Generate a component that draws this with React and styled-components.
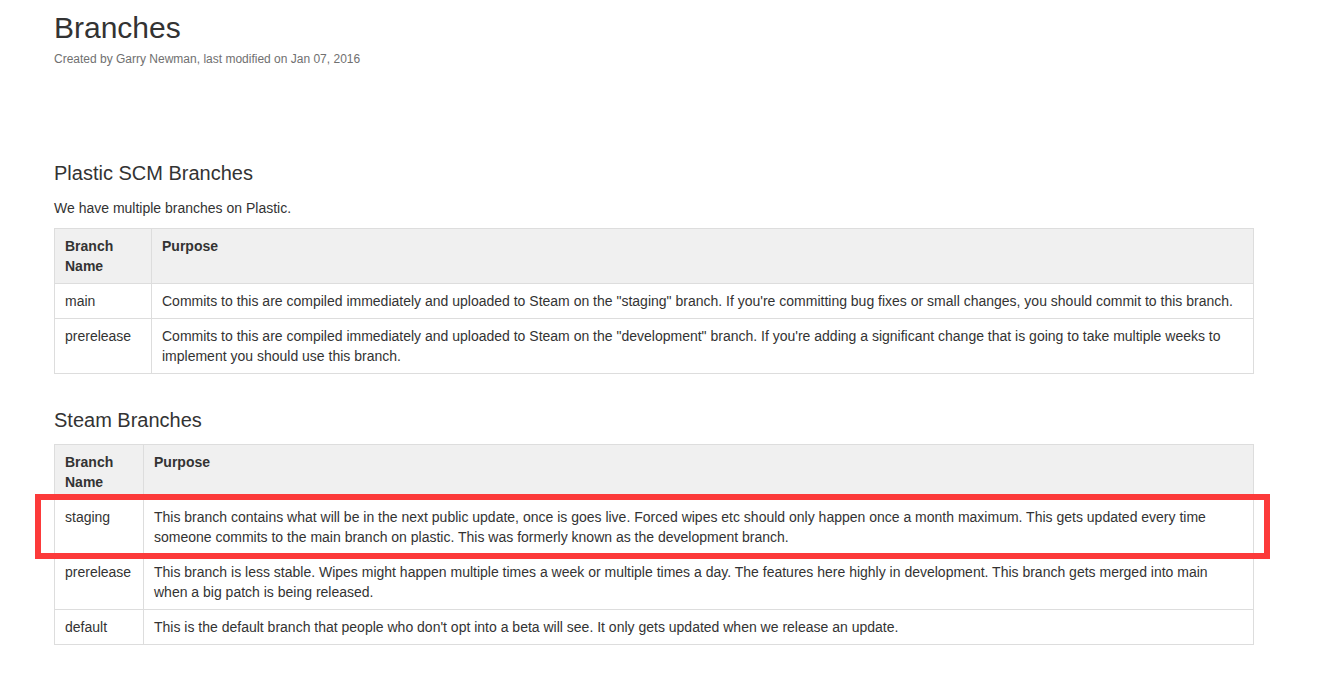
import React from "react";
import styled, { createGlobalStyle } from "styled-components";

const Global = createGlobalStyle`
  html, body { margin: 0; padding: 0; background: #fff; }
  body {
    font-family: "Liberation Sans", Arial, sans-serif;
    font-size: 14px;
    line-height: 20px;
    color: #333;
  }
`;

const Page = styled.div`
  padding: 10px 0 40px 54px;
`;

const Title = styled.h1`
  margin: 0;
  font-size: 30px;
  line-height: 36px;
  font-weight: normal;
  color: #333;
`;

const Meta = styled.div`
  margin-top: 5px;
  font-size: 12px;
  line-height: 16px;
  color: #707070;
`;

const Heading = styled.h2`
  margin: ${(p) => p.$top}px 0 0;
  font-size: 20px;
  line-height: 30px;
  font-weight: normal;
  color: #333;
`;

const Para = styled.p`
  margin: 10px 0 0;
`;

const TableWrap = styled.div`
  position: relative;
  margin-top: ${(p) => p.$top}px;
  width: 1200px;
`;

const Table = styled.table`
  border-collapse: collapse;
  width: 1200px;
`;

const Th = styled.th`
  background: #f0f0f0;
  border: 1px solid #ddd;
  padding: 7px 10px;
  text-align: left;
  vertical-align: top;
  font-weight: bold;
  width: ${(p) => (p.$w ? `${p.$w}px` : "auto")};
`;

const Td = styled.td`
  border: 1px solid #ddd;
  padding: 7px 10px;
  text-align: left;
  vertical-align: top;
`;

const Highlight = styled.div`
  position: absolute;
  left: -19px;
  top: 50px;
  width: 1235px;
  height: 65px;
  box-sizing: border-box;
  border: 6px solid #fc3a3a;
  pointer-events: none;
`;

function BranchTable({ colWidth, rows, highlight, top }) {
  return (
    <TableWrap $top={top}>
      <Table>
        <thead>
          <tr>
            <Th $w={colWidth}>
              Branch
              <br />
              Name
            </Th>
            <Th>Purpose</Th>
          </tr>
        </thead>
        <tbody>
          {rows.map(([name, purpose]) => (
            <tr key={name}>
              <Td>{name}</Td>
              <Td>{purpose}</Td>
            </tr>
          ))}
        </tbody>
      </Table>
      {highlight && <Highlight />}
    </TableWrap>
  );
}

const plastic = [
  [
    "main",
    'Commits to this are compiled immediately and uploaded to Steam on the "staging" branch. If you\'re committing bug fixes or small changes, you should commit to this branch.',
  ],
  [
    "prerelease",
    'Commits to this are compiled immediately and uploaded to Steam on the "development" branch. If you\'re adding a significant change that is going to take multiple weeks to implement you should use this branch.',
  ],
];

const steam = [
  [
    "staging",
    "This branch contains what will be in the next public update, once is goes live. Forced wipes etc should only happen once a month maximum. This gets updated every time someone commits to the main branch on plastic. This was formerly known as the development branch.",
  ],
  [
    "prerelease",
    "This branch is less stable. Wipes might happen multiple times a week or multiple times a day. The features here highly in development. This branch gets merged into main when a big patch is being released.",
  ],
  [
    "default",
    "This is the default branch that people who don't opt into a beta will see. It only gets updated when we release an update.",
  ],
];

export default function App() {
  return (
    <Page>
      <Global />
      <Title>Branches</Title>
      <Meta>Created by Garry Newman, last modified on Jan 07, 2016</Meta>
      <Heading $top={91}>Plastic SCM Branches</Heading>
      <Para>We have multiple branches on Plastic.</Para>
      <BranchTable colWidth={76} rows={plastic} top={10} />
      <Heading $top={31}>Steam Branches</Heading>
      <BranchTable colWidth={68} rows={steam} top={9} highlight />
    </Page>
  );
}
